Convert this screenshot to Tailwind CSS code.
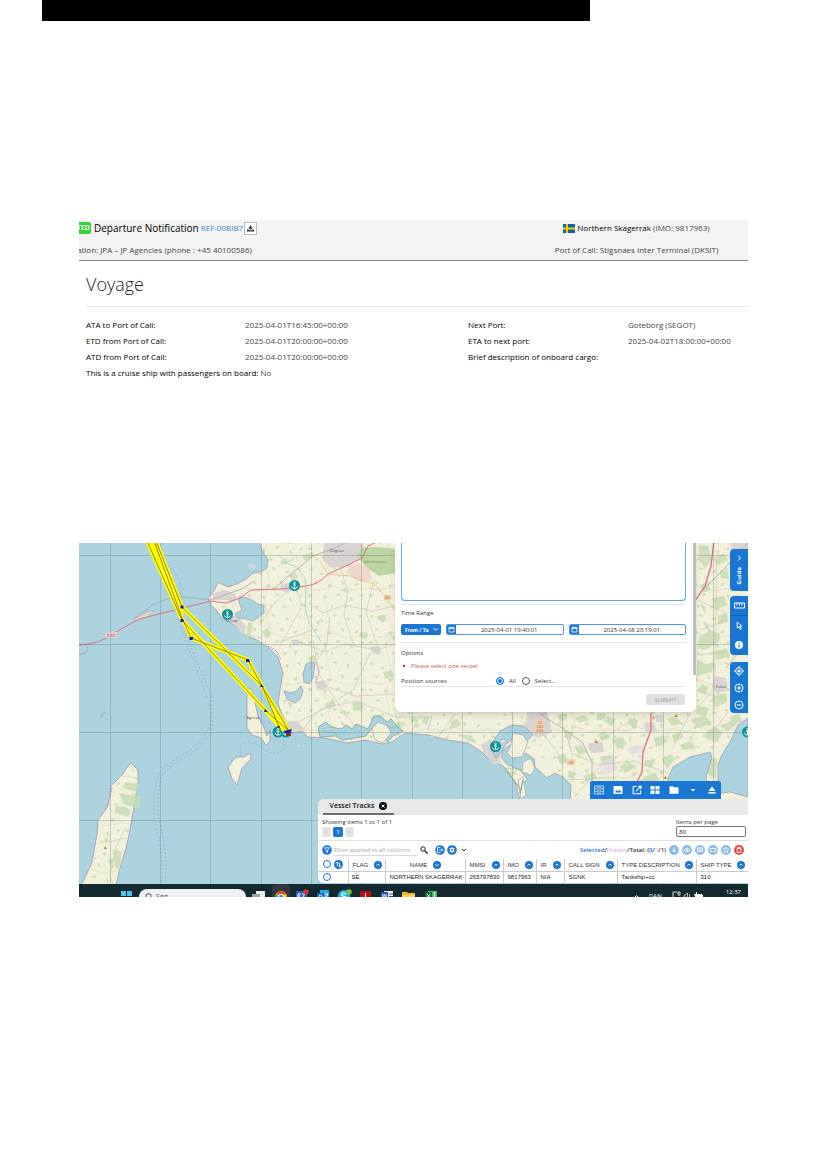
<!DOCTYPE html>
<html lang="en">
<head>
  <meta charset="UTF-8" />
  <meta name="viewport" content="width=device-width, initial-scale=1.0" />
  <title>Departure Notification</title>
  <script src="https://cdn.jsdelivr.net/npm/@tailwindcss/browser@4"></script>
</head>
<body class="bg-white font-['Open_Sans','Noto_Sans',sans-serif] text-black">
  <div class="ml-[42px] mr-[237px] h-[21px] bg-black"></div>

  <main class="px-[79px] pt-[199px] pb-[272px]">

    <!-- Notification -->
    <section class="h-[323px] overflow-hidden text-[8px] leading-4 text-[#444]">
      <header class="flex h-[41px] border-b border-[#8c8c8c] bg-[#f3f3f3]">
        <div class="w-2/3">
          <div class="flex h-4 items-center">
            <span class="flex h-3 w-3 justify-end overflow-hidden rounded-r-xs bg-[#32d13c] pr-px text-[7px] leading-3 font-semibold text-white">TED</span>
            <h1 class="ml-[3px] text-[10px] font-medium text-black">Departure Notification</h1>
            <a href="#" class="ml-[2px] text-[8px] text-[#4285c4]">REF-00BIB7</a>
            <button aria-label="Download" class="ml-px flex h-[13px] w-[13px] items-center justify-center border border-[#bbb] bg-white">
              <svg class="h-[7px] w-[7px]" viewBox="0 0 8 8" fill="#333"><path d="M3 .5h2V3h2L4 5.500 1 3h2zM0 5h1.500l1 1h3l1-1H8v2.500H0z"/></svg>
            </button>
          </div>
          <p class="-ml-[2px] mt-[6px]">ation: JPA – JP Agencies (phone : +45 40100586)</p>
        </div>
        <div class="w-1/3 text-center">
          <p class="flex h-4 items-center justify-center gap-[2px]">
            <svg class="h-[9px] w-3" viewBox="0 0 12 9"><path fill="#0a66a8" d="M0 0h12v9H0z"/><path fill="#fc0" d="M3 0h2v9H3zM0 3.500h12v2H0z"/></svg>
            <span><span class="font-medium text-black">Northern Skagerrak</span> (IMO: 9817963)</span>
          </p>
          <p class="mt-[6px]">Port of Call: Stigsnaes Inter Terminal (DKSIT)</p>
        </div>
      </header>
      <div class="ml-[7px]">
        <h2 class="border-b border-[#e8e8e8] pt-[11px] pb-[10px] text-[18px] leading-6 font-light text-[#222]">Voyage</h2>
        <dl class="mt-[10px] grid grid-cols-[159fr_223fr_160fr_120fr]">
          <dt class="font-medium text-black">ATA to Port of Call:</dt>
          <dd>2025-04-01T16:45:00+00:00</dd>
          <dt class="font-medium text-black">Next Port:</dt>
          <dd>Goteborg (SEGOT)</dd>
          <dt class="font-medium text-black">ETD from Port of Call:</dt>
          <dd>2025-04-01T20:00:00+00:00</dd>
          <dt class="font-medium text-black">ETA to next port:</dt>
          <dd>2025-04-02T18:00:00+00:00</dd>
          <dt class="font-medium text-black">ATD from Port of Call:</dt>
          <dd>2025-04-01T20:00:00+00:00</dd>
          <dt class="font-medium text-black">Brief description of onboard cargo:</dt>
          <dd></dd>
          <div class="col-span-2 flex gap-[2px]">
            <dt class="font-medium text-black">This is a cruise ship with passengers on board:</dt>
            <dd>No</dd>
          </div>
        </dl>
      </div>
    </section>

    <!-- Map -->
    <section class="relative h-[354px] overflow-hidden bg-[#aad3df] text-[6px] leading-2 text-[#333]">
      <svg class="absolute inset-0 h-full w-full" viewBox="79 543 669 354" preserveAspectRatio="xMinYMin slice">
        <defs>
          <g id="anchor">
            <circle r="5.500" fill="#0b9296"/>
            <path d="M0-2v5M-1.500-.5h3M-3 .8Q-2.500 3.200 0 3.200T3 .8" fill="none" stroke="#fff" stroke-width=".9"/>
            <circle cy="-2.700" r=".9" fill="none" stroke="#fff" stroke-width=".7"/>
          </g>
          <pattern id="fields" width="61" height="47" patternUnits="userSpaceOnUse">
            <path d="M4 5l3-1 1 2-3 1zM15 9l2-1 2 3-3 0zM28 3l4 1-1 2-3-1zM41 8l2-2 2 1-1 3zM54 4l2 0 1 3-3-1zM9 18l3-1 0 3-2 0zM22 21l4-1 1 2-4 2zM36 17l2 0 2 3-3 1zM49 21l3-2 2 1-3 3zM3 31l3-1 1 3-3 0zM18 33l2-2 2 2-2 2zM31 30l3-1 2 2-4 1zM45 34l2-1 1 4-2 0zM56 30l3 1-1 2-2 0zM10 42l3-1 1 2-3 1zM26 41l2 0 0 3-2-1zM38 43l4-2 1 2-3 1z" fill="#cfe0b8"/>
            <path d="M33 11l2 1-1 2zM13 26l2 0-1 2zM52 39l2 1-2 1z" fill="#dcd3cf"/>
            <path d="M0 24l16 2 12-4 14 5 19-3M22 0l4 20-6 14 2 13" fill="none" stroke="#dbd8c6" stroke-width=".6"/>
          </pattern>
        </defs>

        <!-- land -->
        <g fill="#f1f0da" stroke="#a797b3" stroke-width=".8">
          <path id="mainland" d="M258 540L262 550L268 560L267 568L261 572L253 573L246 579L237 584L228 587L222 584L218 582L214 591L208 598L211 605L218 612L222 619L230 622L238 628L246 636L253 638L262 643L268 647L278 657L283 673L280 690L278 703L281 712L286 722L285 730L292 733L302 731L308 737L325 738L348 743L365 740L382 744L392 742L405 733L428 735L448 740L468 743L482 752L492 762L502 765L508 772L515 782L520 800H760V540Z"/>
          <path d="M247 688L252 690L254 698L258 716L263 725L267 736L270 730L270 741L266 745L261 738L252 735L247 728Z"/>
          <path d="M228 767L236 757L244 757L250 753L251 759L242 768L237 785L232 779Z"/>
          <path d="M74 897L84 880L92 862L97 834L98 820L108 806L111 786L123 774L128 766L131 763L138 770L138 783L130 830L126 848L120 868L116 885L112 897Z"/>
        </g>
        <path fill="url(#fields)" d="M258 540L262 550L268 560L267 568L261 572L253 573L246 579L237 584L228 587L214 591L222 619L246 636L262 643L278 657L283 673L280 690L278 703L286 722L285 730L302 731L325 738L348 743L382 744L405 733L468 743L492 762L508 772L520 800H760V540Z"/>
        <path fill="url(#fields)" d="M84 880L92 862L97 834L98 820L108 806L111 786L131 763L138 770L138 783L126 848L112 897H79Z"/>
        <path d="M150 611l-14 7-2 3 4 0 9-4 8-7z" fill="#dfdccd" stroke="#b3a3b4" stroke-width=".6"/>
        <path d="M79 645l6-1 3 4-3 5-6 2M101 718q0-4 4-6" fill="none" stroke="#a98fa0" stroke-width=".8"/>

        <!-- towns -->
        <g fill="#d9d3d2">
          <path d="M325 540h35l4 8-4 10-12 9h-18l-8-8zM222 613l8 4 8-2 8 12-3 8-10-12zM212 594l12-4 12 4 0 8-10-2-12 0zM281 585l8-2 5 5-6 5-8-3zM291 640l7-1 2 5-7 1zM370 647l10-1 1 7-8 1zM315 682l9-2 2 9-9 1zM282 722l14-1 8 8-16 4zM481 745l9-6 6 6-6 12-6-4zM487 756l12-4 2 11-8 2zM527 712l20-2 5 22-14 6-12-8zM714 676l12 2 2 12-10 3-6-6zM588 743l14-1 2 10-13 1zM644 724l10-2 3 9-11 1zM655 715l8 0 1 7-8 0zM730 543h18v8h-16zM703 622l6 2-2 6z"/>
        </g>
        <path d="M348 567l10-4 11 6 3 10-12 3-10-6z" fill="#f0d6cb"/>

        <!-- woods -->
        <path d="M362 548l14-1 20 2v24l-17 3-14-10-8-10z" fill="#bdd5a0"/>
        <g fill="#c6dcb2" opacity=".8">
          <path d="M248 622l5 1-3 14-4 2zM262 632l5-4 4 6-4 5zM288 576l7-4 3 5-4 4zM270 590l4-3 3 4zM377 616l8-2 2 6-8 1zM360 632l8 1-1 6-8-2zM340 590l6-2 1 5zM302 556l10-4 3 4-10 5zM280 562l5-3 4 4-7 2zM294 650l4 1-3 5zM308 658l6-3 2 5-6 2zM383 672l9-2 2 7-8 2zM352 703l9-2 3 8-10 2zM325 704l8-4 3 5-7 5zM298 690l5 3-3 6zM390 636l5-2v8zM287 700l6 4-3 5zM338 712l7-2 2 6zM370 718l10-4 4 6-9 4zM410 718l6-1 2 5-7 1zM392 725l8-4 3 4-7 5zM424 716l5 2-2 7-5-3zM450 722l7-3 5 5-8 4zM461 735l10 0 5 8-8-2zM300 605l5-2 2 4zM315 622l5-2-1 5z"/>
          <path d="M125 782l14 2-2 8-14-4zM119 793l22 4-2 12-15-5zM116 806l9 1-1 7-9-1zM123 806l8 4-2 7-10-3zM113 850l9 2-3 18-4-4zM108 860l5-2-2 8zM104 838l5 1-3 5z"/>
          <path d="M699 545l9 1 4 14-7 8-6-8zM714 556l10-2 4 6-12 6zM720 570l8 2 1 7-8-1zM700 585l8-3 3 8-8 3zM712 598l12-2 3 9-12 5zM700 604l6 3-1 7zM718 616l8-3 2 8-10 4zM700 636l11-6 10 4-2 8-14 8-8-2zM715 651l12-3 2 8-12 4zM697 660l9 4 8-2-2 10-15 4zM702 684l7 3-4 8-8-4zM712 697l14-4 1 9-12 5zM730 717l9-4 3 8-9 4zM697 705l12 3-3 9-10-3zM722 655l7-4v8z"/>
          <path d="M557 715l7-2 4 5-8 4zM575 718l9-3 5 5-10 3zM598 713l8 1-2 6-8 0zM566 731l7 1-2 8-7-3zM575 748l5-3 8 7-9 3zM607 716l9 3-4 7-8-4zM612 740l10-3 5 7-9 5zM629 718l9 2-2 8-8-4zM654 738l9-3 5 7-12 5zM667 719l7-3 8 7-10 3zM672 735l8-3 4 5-10 5zM690 720l14-5 8 8-13 5zM680 745l10-4 6 7-13 2zM706 732l9-6 8 7-8 9-9-4zM600 757l11-2 4 6-12 4zM619 766l10-4 7 5-11 6zM645 760l9 0-2 8-8-2zM557 756l8-2 3 8-8 2zM568 771l7 2-1 6-6-2zM584 776l10-4 3 6-12 4zM640 780l14-8 6 8-18 5zM662 760l8-6 5 5-8 10zM722 726l10-6 4 5-9 6zM708 760l9-1-1 19-8-3zM598 735l6-4 6 6-8 4z"/>
        </g>
        <path d="M248 564l6 0 2 4-7 1zM297 745l3 0 0 2zM627 747l14-2 3 7-13 3zM600 768l14-5 5 7-16 5zM604 760l8-2 4 5-10 3z" fill="#e6d8e4" opacity=".7"/>

        <!-- inlets and lakes -->
        <g fill="#aad3df" stroke="#9c98b0" stroke-width=".7">
          <path d="M238 598L244 597L252 600L258 604L264 605L264 613L259 617L253 621L246 619L238 618L235 614L242 610L240 605Z"/>
          <path d="M306 664L311 662L315 664L313 678L309 684L304 682L303 674Z"/>
          <path d="M284 691L291 693L296 691L301 686L303 691L300 699L295 703L287 699Z"/>
          <path stroke="#6aa18c" d="M318 727L326 722L331 727L341 729L346 725L352 729L356 724L368 729L374 716L380 716L387 722L391 719L399 728L403 731L393 736L388 742L380 733L371 729L366 736L355 738L342 740L336 736L320 737Z"/>
          <path d="M491 744L500 731L512 725L524 726L533 735L527 741L514 738L506 744L500 754L496 758L492 752Z"/>
          <path d="M503 750L510 745L512 754L520 757L526 753L534 759L535 767L547 778L555 773L563 777L571 785L570 800H524L522 786L527 779L520 770L508 765L501 757Z"/>
          <path d="M668 800L668 778L673 767L690 757L710 752L712 757L706 777L707 783L718 784L718 764L722 755L730 742L738 725L748 718V797L730 792L721 793L717 800Z"/>
        </g>
        <g fill="#f1f0da" stroke="#9c98b0" stroke-width=".6">
          <path d="M372 729l6-7 10 4 3 7-8 10-8-3zM513 733l10 2 5 7-6 15-10 1-5-5 4-8zM523 762l8-4 4 10-4 7-9-3zM518 780l5-3 3 18-5 4zM500 741l5-2 1 3-5 1z"/>
        </g>
        <g fill="none" stroke="#9aa8a0" stroke-width="1.200"><path d="M505 768l10 14 6 8M523 780l-3 14"/></g>
        <path d="M268 646l8 5 5 8M313 662l4 1 2 9-3 10M112 788l-3 12-5 12" fill="none" stroke="#c9a3c9" stroke-width="1.400" stroke-dasharray="1.500 1"/>
        <path d="M278 554l10 10 7 2 10 12 1 14-1 16 4 14 12 20M285 563l9-4M432 716l-4 14" fill="none" stroke="#a3dcd8" stroke-width=".9"/>
        <path d="M322 731l10 1 8 3M387 727l14 1M505 768l16 2M507 773l10-1" stroke="#78c878" stroke-width="1.500" stroke-dasharray="1.500 1" opacity=".7" fill="none"/>

        <!-- minor roads -->
        <g fill="none" stroke="#c8c3b6" stroke-width=".6">
          <path d="M289 590l-14 12-16 24M296 590l6 16-22 40M309 603l14 10 22-8 28 6 22-5M312 630l-32 12M295 640l30 12 20-8 32 6 18-6M313 640l6 34 22 34 20 26M330 617l-4 30-16 22M325 686l30 10 40-2M370 653l-16 36-34 22-24 12M340 566l8 26-4 24 10 30M374 580l-8 32 12 36M300 733l20-24 36-8 40 16 36 0M396 714l4 16M410 734l12-20M455 714l-16 22M116 893l-6-18 6-28 10-20M108 842l18-4M560 715l12 38 26 12 36-4 34 12M591 746l44-28M640 800l-26-22-52 2M575 797l28-34M690 713l-18 36M698 600l30 14M700 630l28-10M698 655l30-3M697 690l30 10M717 560l-3 150M530 716l30 40M715 688l-16 18M728 712l-18 24"/>
        </g>
        <g fill="none" stroke="#a8a8a6" stroke-width=".8">
          <path d="M133 619l20-14 21-9 36 4 32-11 12-8M275 588l16-14 22-18 22-8 16-8M547 714l-7 0 22 14 20 14 10 20 0 20M748 543l-24 26-26 26M748 640l-22 28"/>
        </g>

        <!-- motorways -->
        <g fill="none" stroke="#dd6e88" stroke-width="1">
          <path d="M79 645q22-1 37-13l23-13 20-5 52-13 15 2 14-5 11-8 30-1 25-3q12-1 22-12l20-9 14-7 6-12 13-6 7-12"/>
          <path d="M714 540l-3 26-6 20-12 18M651 713l0 17-8 22-1 20-14 28" stroke-width="1.300"/>
        </g>
        <path d="M320 562l8 12 22 2 24 8 14 16 7 12" fill="none" stroke="#f3bf8c" stroke-width=".9"/>
        <g font-size="4" text-anchor="middle">
          <path d="M105 632h12v6h-12z" fill="#efc8cd"/><text x="111" y="637" fill="#7a4250">E 20</text>
          <path d="M384 595h7v5h-7z" fill="#f6cf9e"/><text x="387" y="599" fill="#875b31">22</text>
          <path d="M536 719h8v14h-8zM567 759h8v6h-8z" fill="#f9cfae"/>
          <g fill="#875b31"><text x="540" y="724">22</text><text x="540" y="728">265</text><text x="540" y="732">E55</text><text x="571" y="764">22</text></g>
          <g fill="#555"><text x="337" y="552">Slagelse</text><text x="232" y="622">Korsør</text><text x="253" y="719">Agersø</text><text x="721" y="688">Fakse</text></g>
          <text x="375" y="563" fill="#6a8d58">Sønderskov</text>
        </g>
        <path d="M653 716l2 2-2 1zM676 714l2 3h-3zM596 740l2 3h-3zM665 776l2 3h-3zM105 846l2 3h-3z" fill="#c9702f"/>

        <!-- ferry lines -->
        <g fill="none" stroke="#8aa8e0" stroke-width=".8" stroke-dasharray="2 2">
          <path d="M168 565q10 10 13 22l-2 36 15 40 14 37q4 12 1 28-8 16-28 28-22 12-24 24-6 30 0 52 8 26 3 66M182 622l14 38 16 36 0 32q-6 18-28 30-20 12-23 20-6 30 0 50 8 30 3 70M241 757q-2-12 2-14 10-4 20 6 12 8 20 2 2-10-1-18M260 722l12 0"/>
        </g>

        <!-- graticule -->
        <path d="M110.500 543v354M160.500 543v354M210.500 543v354M261.500 543v354M311.500 543v354M361.500 543v354M412.500 543v354M462.500 543v354M512.500 543v354M562.500 543v354M613.500 543v354M663.500 543v354M713.500 543v354M79 555.500h669M79 644.500h669M79 732.500h669M79 820.500h669" stroke="#4c6a6a" stroke-opacity=".35" stroke-width=".8"/>

        <!-- anchorages -->
        <use href="#anchor" x="294.500" y="585.500"/>
        <use href="#anchor" x="227.500" y="614.500"/>
        <use href="#anchor" x="278" y="732"/>
        <use href="#anchor" x="286" y="732"/>
        <use href="#anchor" x="495.500" y="746.500"/>
        <use href="#anchor" x="747.500" y="732"/>

        <!-- vessel track -->
        <g fill="none" stroke-linejoin="round">
          <g stroke="#ff0" stroke-width="4.200">
            <path d="M147 541L182 620L266 711L289 731M150 541L182 615M156 541L182 607L262 686L289 731M154 541L182 618L191 638L248 660L262 686L284 731M266 711L280 727"/>
          </g>
          <g stroke="#96813a" stroke-width="1">
            <path d="M147 541L182 620L266 711L289 731M156 541L182 607L262 686L289 731M154 541L182 618L191 638L248 660L262 686L280 729"/>
          </g>
        </g>
        <path d="M180.500 605.500h3v3h-3zM180.500 619h3v3h-3zM189.500 637l4 0-1 3-3 0zM246 659l3 0 1 3-4 0zM261 684l3 3-4 0zM265 709l3 3-4 0zM284 731l8-2-2 4-5 0z" fill="#1717b8"/>
        <path d="M286 733h5v3h-5zM277 726l3 0 0 2-3 0z" fill="#7b3f26"/>
      </svg>

      <!-- search form -->
      <form class="absolute top-0 right-[52px] h-[169px] w-[301px] rounded-b-md bg-white pr-[10px] pl-[6px] shadow-md" onsubmit="return false">
        <div class="absolute top-0 right-0 h-[132px] w-[3px] bg-[#bdbdbd]"></div>
        <textarea aria-label="Vessels" class="block h-[58px] w-full resize-none rounded-b-sm border border-t-0 border-[#5fa9dd] bg-white outline-none"></textarea>
        <fieldset aria-label="Time Range" class="mt-[3px] h-[38px] border-t border-[#e5e5e5] pt-1">
          <p>Time Range</p>
          <div class="mt-[7px] flex h-[11px] gap-[5px]">
            <div class="relative w-[40px]">
              <select aria-label="Range type" class="h-full w-full appearance-none rounded-xs bg-[#1976d2] pl-1 text-[5px] font-bold text-white"><option>From / To</option></select>
              <svg class="absolute top-[3px] right-[3px] h-[5px] w-[5px]" viewBox="0 0 6 6" fill="none" stroke="#fff" stroke-width="1.200"><path d="M.5 1.500L3 4l2.500-2.500"/></svg>
            </div>
            <label class="flex flex-1 overflow-hidden rounded-xs border border-[#4d9ad8]">
              <span class="flex w-[9px] items-center justify-center bg-[#1976d2]"><svg class="h-[7px] w-[7px]" viewBox="0 0 7 7" fill="none" stroke="#fff" stroke-width=".8"><path d="M1 1.500h5V6H1zM1 2.500h5M2.200.5v1M4.800.5v1"/></svg></span>
              <input aria-label="From" value="2025-04-01 19:40:01" class="min-w-0 flex-1 text-center text-[6px] outline-none" />
            </label>
            <label class="flex flex-1 overflow-hidden rounded-xs border border-[#4d9ad8]">
              <span class="flex w-[9px] items-center justify-center bg-[#1976d2]"><svg class="h-[7px] w-[7px]" viewBox="0 0 7 7" fill="none" stroke="#fff" stroke-width=".8"><path d="M1 1.500h5V6H1zM1 2.500h5M2.200.5v1M4.800.5v1"/></svg></span>
              <input aria-label="To" value="2025-04-08 23:19:01" class="min-w-0 flex-1 text-center text-[6px] outline-none" />
            </label>
          </div>
        </fieldset>
        <div class="h-[45px] border-y border-[#e5e5e5] pt-[6px]">
          <p>Options</p>
          <ul class="mt-[5px]">
            <li class="flex items-center gap-[6px] text-[#d9534f]"><span class="ml-[2px] h-[2px] w-[2px] bg-[#d32f2f]"></span>Please select one vessel</li>
          </ul>
          <div class="mt-[7px] flex items-center">
            <span class="w-[95px]">Position sources</span>
            <label class="flex items-center gap-[5px]"><input type="radio" name="source" checked class="h-2 w-2 appearance-none rounded-full border border-[#1976d2] checked:bg-[#1976d2] checked:shadow-[inset_0_0_0_1px_white]" />All</label>
            <label class="ml-[6px] flex items-center gap-[5px]"><input type="radio" name="source" class="h-2 w-2 appearance-none rounded-full border border-[#555]" />Select...</label>
          </div>
        </div>
        <div class="flex justify-end pt-[7px] pr-px">
          <button disabled class="h-[11px] w-[39px] rounded-xs bg-[#e0e0e0] text-[6px] text-[#a5a5a5]">SUBMIT</button>
        </div>
      </form>

      <!-- map controls -->
      <nav class="absolute top-[6px] right-0 flex w-[18px] flex-col text-white">
        <button class="flex h-[42px] flex-col items-center justify-center gap-[6px] rounded-l-sm bg-[#1976d2]">
          <svg class="h-[6px] w-[6px]" viewBox="0 0 6 6" fill="none" stroke="#fff"><path d="M2 .5L4.500 3 2 5.500"/></svg>
          <span class="rotate-180 text-[6px] font-bold [writing-mode:vertical-rl]">Guide</span>
        </button>
        <div class="mt-[5px] flex h-[59px] flex-col rounded-l-sm bg-[#1976d2]">
          <button aria-label="Measure" class="flex flex-1 items-center justify-center border-b border-[#1263b5]"><svg class="h-[7px] w-[11px]" viewBox="0 0 11 7" fill="none" stroke="#fff"><path d="M.5 1h10v5H.500zM3 1v2.500M5.500 1v2.500M8 1v2.500"/></svg></button>
          <button aria-label="Select" class="flex flex-1 items-center justify-center"><svg class="h-[9px] w-[9px]" viewBox="0 0 9 9" fill="none" stroke="#fff" stroke-width=".9"><path d="M2 1l5 4-2.200.3L6.300 8l-1 .5L4 5.800 2.300 7z"/></svg></button>
          <button aria-label="Info" class="flex flex-1 items-center justify-center"><svg class="h-2 w-2" viewBox="0 0 8 8"><circle cx="4" cy="4" r="4" fill="#fff"/><path d="M4 1.500v1M4 3.400v3" stroke="#1976d2" stroke-width="1.200"/></svg></button>
        </div>
        <div class="mt-[7px] flex h-[51px] flex-col rounded-l-sm bg-[#1976d2]">
          <button aria-label="Center" class="flex flex-1 items-center justify-center"><svg class="h-[10px] w-[10px]" viewBox="0 0 10 10"><g fill="none" stroke="#fff"><circle cx="5" cy="5" r="3.300"/><path d="M5 0v2M5 8v2M0 5h2M8 5h2"/></g><circle cx="5" cy="5" r="1.600" fill="#fff"/></svg></button>
          <button aria-label="Zoom in" class="flex flex-1 items-center justify-center"><svg class="h-[10px] w-[10px]" viewBox="0 0 10 10" fill="none" stroke="#fff"><circle cx="5" cy="5" r="4"/><path d="M5 2.800v4.400M2.800 5h4.400"/></svg></button>
          <button aria-label="Zoom out" class="flex flex-1 items-center justify-center"><svg class="h-[10px] w-[10px]" viewBox="0 0 10 10" fill="none" stroke="#fff"><circle cx="5" cy="5" r="4"/><path d="M2.800 5h4.400"/></svg></button>
        </div>
      </nav>

      <div class="absolute right-[27px] bottom-[98px] flex h-[18px] w-[131px] items-center justify-around rounded-t-xs bg-[#1976d2]">
        <button aria-label="Layout"><svg class="h-[10px] w-[10px]" viewBox="0 0 10 10" fill="none" stroke="#fff" stroke-width=".8"><path d="M.5 1h9v8h-9zM4 1v8M6 1v8M.5 3.600h3M.5 6.300h3M6.500 3.600h3M6.500 6.300h3" stroke-opacity=".85"/></svg></button>
        <button aria-label="Image"><svg class="h-[10px] w-[10px]" viewBox="0 0 10 10"><rect x=".5" y="1" width="9" height="8" rx="1" fill="#fff"/><path d="M1.800 7.500l2-2.600 1.300 1.500 1.300-1.900 2 3z" fill="#1976d2"/></svg></button>
        <button aria-label="Open"><svg class="h-[10px] w-[10px]" viewBox="0 0 10 10" fill="none" stroke="#fff" stroke-width="1.100"><path d="M4.500 1.500H1.200v7.300h7.300V5.500M6 1.200h3v3M9 1.200L4 6.200"/></svg></button>
        <button aria-label="Grid"><svg class="h-[10px] w-[10px]" viewBox="0 0 10 10" fill="#fff"><path d="M.5 1h4v3.500h-4zM5.500 1h4v3.500h-4zM.5 5.500h4V9h-4zM5.500 5.500h4V9h-4z"/></svg></button>
        <button aria-label="Folder"><svg class="h-[10px] w-[10px]" viewBox="0 0 10 10" fill="#fff"><path d="M.5 2q0-.8.8-.8H4l1 1h3.700q.8 0 .8.800v5q0 .8-.8.800H1.300q-.8 0-.8-.8z"/></svg></button>
        <button aria-label="More"><svg class="h-[10px] w-[10px]" viewBox="0 0 10 10" fill="#fff"><path d="M2.500 4h5L5 6.500z"/></svg></button>
        <button aria-label="Collapse"><svg class="h-[10px] w-[10px]" viewBox="0 0 10 10" fill="#fff"><path d="M5 1.500l3.500 4.500h-7zM1.500 7h7v1.500h-7z"/></svg></button>
      </div>

      <!-- vessel tracks -->
      <div class="absolute right-0 bottom-[14px] w-[430px] overflow-hidden rounded-l-md bg-white">
        <div class="h-4 bg-[#e8e8e8] pl-[5px]">
          <div class="flex h-4 w-[71px] items-center justify-center gap-[5px] border-b-2 border-[#6b6b6b] text-[7px] font-semibold text-[#111]">
            Vessel Tracks
            <button aria-label="Close"><svg class="h-2 w-2" viewBox="0 0 8 8"><circle cx="4" cy="4" r="4"/><path d="M2.500 2.500l3 3M5.500 2.500l-3 3" stroke="#fff"/></svg></button>
          </div>
        </div>
        <div class="flex h-[26px] justify-between border-b border-[#e0e0e0] pt-[3px] pr-[2px] pl-1">
          <div>
            <p>Showing items 1 to 1 of 1</p>
            <div class="mt-px flex gap-[2px] text-center leading-[10px]">
              <button class="h-[10px] w-[9px] rounded-xs bg-[#e4e4e4] text-[#aaa]">&lt;</button>
              <button class="h-[10px] w-[10px] rounded-xs bg-[#1976d2] text-white">1</button>
              <button class="h-[10px] w-[9px] rounded-xs bg-[#e4e4e4] text-[#aaa]">&gt;</button>
            </div>
          </div>
          <label class="block w-[70px]">Items per page
            <input value="30" class="block h-[11px] w-full rounded-xs border border-[#777] px-[2px] text-[6px] text-black" />
          </label>
        </div>
        <div class="flex h-[18px] items-center justify-between pr-1 pl-1">
          <div class="flex items-center">
            <button aria-label="Filter"><svg class="h-[10px] w-[10px]" viewBox="0 0 10 10"><circle cx="5" cy="5" r="4.800" fill="#1976d2"/><path d="M2.500 2.800h5L5.600 5.200v2.500l-1.200-.8V5.200z" fill="none" stroke="#fff" stroke-width=".8"/></svg></button>
            <input aria-label="Filter" placeholder="Filter applied in all columns" class="ml-[2px] h-[11px] w-[84px] border-b border-[#ddd] text-[6px] placeholder:text-[#aaa]" />
            <svg class="ml-[2px] h-2 w-2" viewBox="0 0 8 8" fill="none" stroke="#222"><circle cx="3" cy="3" r="2.200"/><path d="M4.700 4.700l2.800 2.800" stroke-width="1.400"/></svg>
            <button aria-label="Export" class="ml-[7px]"><svg class="h-[10px] w-[10px]" viewBox="0 0 10 10"><circle cx="5" cy="5" r="4.800" fill="#1976d2"/><path d="M5.500 2.500h-3v5h3M4 5h4M6.500 3.500L8 5 6.500 6.500" fill="none" stroke="#fff" stroke-width=".8"/></svg></button>
            <button aria-label="Settings" class="ml-[2px]"><svg class="h-[10px] w-[10px]" viewBox="0 0 10 10"><circle cx="5" cy="5" r="4.800" fill="#1976d2"/><circle cx="5" cy="5" r="1.700" fill="none" stroke="#fff" stroke-width="1.100"/><path d="M5 2v6M2.400 3.500l5.200 3M2.400 6.500l5.200-3" stroke="#fff" stroke-width=".7"/><circle cx="5" cy="5" r=".9" fill="#1976d2"/></svg></button>
            <svg class="ml-1 h-[6px] w-[6px]" viewBox="0 0 6 6" fill="none" stroke="#333"><path d="M1 2l2 2 2-2"/></svg>
          </div>
          <div class="flex items-center gap-[3px]">
            <p class="font-semibold"><span class="text-[#1976d2]">Selected</span>/<span class="font-normal text-[#d9a3e0]">Hidden</span>/Total: (<span class="text-[#1976d2]">0</span>/<span class="font-normal text-[#d9a3e0]">0</span>/1)</p>
            <button aria-label="Details"><svg class="h-[10px] w-[10px]" viewBox="0 0 10 10"><circle cx="5" cy="5" r="4.900" fill="#8cbae8"/><path d="M5 2.500v4M3.500 5.500L5 7l1.500-1.500" fill="none" stroke="#fff"/></svg></button>
            <button aria-label="Show"><svg class="h-[10px] w-[10px]" viewBox="0 0 10 10"><circle cx="5" cy="5" r="4.900" fill="#8cbae8"/><path d="M2 5q3-4 6 0-3 4-6 0z" fill="none" stroke="#fff" stroke-width=".9"/><circle cx="5" cy="5" r="1" fill="#fff"/></svg></button>
            <button aria-label="Comment"><svg class="h-[10px] w-[10px]" viewBox="0 0 10 10"><circle cx="5" cy="5" r="4.900" fill="#8cbae8"/><path d="M2.500 2.800h5v3.700h-4l-1 1zM3.500 4h3M3.500 5.300h3" fill="none" stroke="#fff" stroke-width=".8"/></svg></button>
            <button aria-label="Track"><svg class="h-[10px] w-[10px]" viewBox="0 0 10 10"><circle cx="5" cy="5" r="4.900" fill="#8cbae8"/><rect x="2" y="3.500" width="6" height="3" rx="1" fill="none" stroke="#fff"/><path d="M4.500 5h1v2h-1z" fill="#8cbae8"/></svg></button>
            <button aria-label="Favourite"><svg class="h-[10px] w-[10px]" viewBox="0 0 10 10"><circle cx="5" cy="5" r="4.900" fill="#8cbae8"/><path d="M5 2l.9 2 2.100.2-1.600 1.400.5 2.100L5 6.600 3.100 7.700l.5-2.100L2 4.200 4.100 4z" fill="none" stroke="#fff" stroke-width=".7"/></svg></button>
            <button aria-label="Delete"><svg class="h-[10px] w-[10px]" viewBox="0 0 10 10"><circle cx="5" cy="5" r="4.900" fill="#e5433d"/><path d="M3.200 3.500h3.600v4H3.200zM2.800 2.800h4.400M4.200 2.200h1.600" fill="none" stroke="#fff" stroke-width=".9"/></svg></button>
          </div>
        </div>
        <table class="w-full table-fixed border-collapse font-['Liberation_Sans',sans-serif] whitespace-nowrap">
          <colgroup>
            <col class="w-[30px]" /><col class="w-[37px]" /><col class="w-[80px]" /><col class="w-[38px]" /><col class="w-[33px]" /><col class="w-[28px]" /><col class="w-[53px]" /><col class="w-[79px]" /><col class="w-[52px]" />
          </colgroup>
          <thead>
            <tr id="columns" class="h-3 border-b border-[#ccc]">
              <th class="pl-[5px]">
                <div class="flex gap-[3px]">
                  <input type="radio" aria-label="Select all" class="h-2 w-2 appearance-none rounded-full border border-[#1976d2]" />
                  <svg class="h-[9px] w-[9px]" viewBox="0 0 8 8"><circle cx="4" cy="4" r="4" fill="#1976d2"/><path d="M3 5.500V1.800M1.800 3L3 1.800 4 3M5 2.500v3.700M4 5.200l1 1 1.200-1" fill="none" stroke="#fff" stroke-width=".8"/></svg>
                </div>
              </th>
            </tr>
          </thead>
          <tbody>
            <tr class="h-3 text-[#222]">
              <td class="pl-[5px]"><input type="radio" aria-label="Select NORTHERN SKAGERRAK" class="block h-2 w-2 appearance-none rounded-full border border-[#1976d2]" /></td>
              <td class="border-l border-[#ccc] pl-[3px]">SE</td>
              <td class="border-l border-[#ccc] pl-1">NORTHERN SKAGERRAK</td>
              <td class="border-l border-[#ccc] pl-1">265797830</td>
              <td class="border-l border-[#ccc] pl-1">9817963</td>
              <td class="border-l border-[#ccc] pl-1">N/A</td>
              <td class="border-l border-[#ccc] pl-1">SGNK</td>
              <td class="border-l border-[#ccc] pl-1">Tankship+cc</td>
              <td class="border-l border-[#ccc] pl-1">310</td>
            </tr>
          </tbody>
        </table>
      </div>

      <!-- taskbar -->
      <footer class="absolute inset-x-0 bottom-0 flex h-[13px] items-start justify-between overflow-hidden bg-[#132a31] text-white">
        <div class="flex items-start pl-[42px]">
          <svg class="mt-[7px] h-[11px] w-[11px]" viewBox="0 0 11 11" fill="#4cc2f1"><path d="M0 0h5v5H0zM6 0h5v5H6zM0 6h5v5H0zM6 6h5v5H6z"/></svg>
          <label class="mt-[5px] ml-[7px] flex h-4 w-[107px] items-center gap-1 rounded-full bg-[#eef1f4] pl-[5px]">
            <svg class="h-2 w-2" viewBox="0 0 8 8" fill="none" stroke="#333" stroke-width=".9"><circle cx="4.500" cy="3.300" r="2.600"/><path d="M2.700 5.200L.8 7.300"/></svg>
            <input aria-label="Search" placeholder="Søg" class="w-[60px] text-[7px] placeholder:text-[#555]" />
          </label>
          <svg class="mt-[7px] ml-[6px] h-[11px] w-[13px]" viewBox="0 0 13 11"><path d="M4 0h9v8H4z" fill="#eee"/><path d="M0 3h8v8H0z" fill="#9ba3a5"/></svg>
          <div class="ml-[7px] flex h-[18px] w-[18px] justify-center rounded-sm bg-[#30383e]">
            <svg class="mt-[7px] h-[12px] w-[12px]" viewBox="0 0 12 12"><circle cx="6" cy="6" r="6" fill="#fbc116"/><path d="M1 3a6 6 0 0 1 10 0L6 4z" fill="#e8402f"/><path d="M.8 3A6 6 0 0 0 5 12l1-5z" fill="#32a350"/><circle cx="6" cy="6" r="2.700" fill="#4285f4" stroke="#fff"/></svg>
          </div>
          <svg class="mt-[4px] ml-[5px] h-[14px] w-[14px]" viewBox="0 0 14 14"><path d="M1 3h11v11H1z" fill="#2760c6"/><path d="M3 10V6h3M3 8h2M7 6h3l-3 4h3" fill="none" stroke="#fff"/><circle cx="11" cy="4" r="2.700" fill="#d9363a"/></svg>
          <svg class="mt-[6px] ml-2 h-[12px] w-[12px]" viewBox="0 0 12 12"><path d="M3 0h9v12H3z" fill="#2aa4e6"/><path d="M0 3h7v8H0z" fill="#0b63b5"/><circle cx="3.500" cy="6.500" r="1.600" fill="none" stroke="#fff"/><path d="M8 4h3L8 8h3" stroke="#fff" fill="none"/></svg>
          <svg class="mt-[5px] ml-[9px] h-[13px] w-[14px]" viewBox="0 0 14 13"><circle cx="6" cy="7" r="6" fill="#25b1e8"/><path d="M8 5q-4-2-4.500.8Q4 7 8 8" fill="none" stroke="#fff" stroke-width="1.300"/><circle cx="11" cy="3" r="2.800" fill="#7abf42"/></svg>
          <svg class="mt-[7px] ml-2 h-[11px] w-[11px]" viewBox="0 0 11 11"><path d="M0 0h11v11H0z" fill="#b50d14"/><path d="M5.500 2v5L3 9M5.500 7L8 8" fill="none" stroke="#fff"/></svg>
          <svg class="mt-[7px] ml-[10px] h-[11px] w-[12px]" viewBox="0 0 12 11"><path d="M3 0h9v11H3z" fill="#eee"/><path d="M0 1h7v8H0z" fill="#2351a5"/><path d="M1.200 3l1 4 1.200-4 1.200 4 1-4" fill="none" stroke="#fff" stroke-width=".8"/><path d="M8 3h4M8 5.500h4" stroke="#2351a5"/></svg>
          <svg class="mt-[7px] ml-[9px] h-[11px] w-[13px]" viewBox="0 0 13 11"><path d="M0 1h5l1 1h7v9H0z" fill="#f2b92c"/><path d="M0 4h13v7H0z" fill="#ffd65a"/></svg>
          <svg class="mt-[7px] ml-[10px] h-[11px] w-[12px]" viewBox="0 0 12 11"><path d="M3 0h9v11H3z" fill="#4eb57a"/><path d="M0 1h7v8H0z" fill="#10703d"/><path d="M2 3l3 4M5 3L2 7M9.500 1v9" stroke="#fff" stroke-width=".9"/></svg>
        </div>
        <div class="flex items-start pr-[7px]">
          <svg class="mt-[10px] mr-[9px] h-[6px] w-[7px]" viewBox="0 0 7 6" fill="none" stroke="#fff"><path d="M1 4l2.500-2.500L6 4"/></svg>
          <span class="mt-[8px]">DAN</span>
          <svg class="mt-[7px] ml-[10px] h-2 w-[9px]" viewBox="0 0 9 8" fill="none" stroke="#ddd"><path d="M5 1H1v6h4M6 1h2v3H6z"/></svg>
          <svg class="mt-[8px] ml-[2px] h-2 w-2" viewBox="0 0 8 8" fill="none" stroke="#ccc" stroke-width=".8"><path d="M1 3h1.500L4.500 1v6L2.500 5H1zM6.500 2v4"/></svg>
          <svg class="mt-[8px] ml-[3px] h-2 w-[9px]" viewBox="0 0 9 8" fill="#fff"><path d="M0 2h2V0h1v2h5v1h1v2H8v2H2z"/></svg>
          <span class="mt-[4px] ml-[23px]">12:37</span>
        </div>
      </footer>
    </section>
  </main>

  <script>
    const columns = [
      ["FLAG", "up"], ["NAME", "down"], ["MMSI", "up"], ["IMO", "up"],
      ["IR", "up"], ["CALL SIGN", "up"], ["TYPE DESCRIPTION", "up"], ["SHIP TYPE", "up"]
    ];
    const row = document.getElementById("columns");
    columns.forEach(([name, dir]) => {
      const arrow = dir === "up" ? "M2.300 4.700L4 3l1.700 1.700" : "M2.300 3.300L4 5l1.700-1.700";
      const justify = name === "NAME" ? "justify-center gap-[6px]" : "justify-between";
      row.innerHTML += `<th class="border-l border-[#ccc] pl-1 pr-[3px] font-normal"><div class="flex items-center ${justify}">${name}<svg class="h-2 w-2" viewBox="0 0 8 8"><circle cx="4" cy="4" r="4" fill="#1976d2"/><path d="${arrow}" fill="none" stroke="#fff" stroke-width=".9"/></svg></div></th>`;
    });
  </script>
</body>
</html>
